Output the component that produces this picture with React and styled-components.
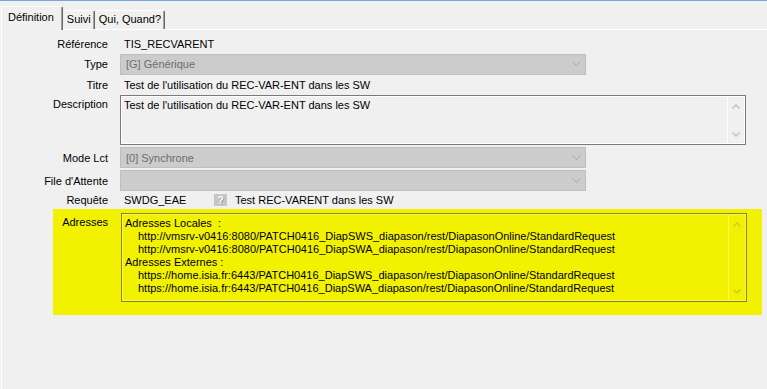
import styled, { createGlobalStyle } from 'styled-components';

const GlobalStyle = createGlobalStyle`
  html, body {
    margin: 0;
    padding: 0;
    background: #f0f0f0;
  }
  body {
    font-family: "Liberation Sans", Arial, sans-serif;
    font-size: 11px;
    color: #000;
  }
`;

const Window = styled.div`
  width: 767px;
  height: 389px;
  background: #f0f0f0;
  border-top: 1px solid #73a7e6;
  box-sizing: border-box;
  display: flex;
  flex-direction: column;
  overflow: hidden;
`;

const TabStrip = styled.div`
  display: flex;
  align-items: flex-end;
  height: 28px;
  padding-left: 1px;
  position: relative;
  z-index: 1;
`;

const Tab = styled.div`
  box-sizing: border-box;
  height: ${({ $active }) => ($active ? '24px' : '19px')};
  margin-bottom: ${({ $active }) => ($active ? '-1px' : '0')};
  padding: ${({ $active }) => ($active ? '4px 8px 0 6px' : '2px 3px 0 3px')};
  background: #f0f0f0;
  border-top: 1px solid #ffffff;
  border-left: 1px solid ${({ $active }) => ($active ? '#ffffff' : '#f0f0f0')};
  border-right: 1px solid #696969;
  border-top-left-radius: 2px;
  border-top-right-radius: 2px;
  white-space: nowrap;
  box-shadow: inset -1px 0 0 #a0a0a0;
`;

const Panel = styled.div`
  flex: 1;
  margin-left: 1px;
  border-left: 1px solid #ffffff;
  border-top: 1px solid #ffffff;
  padding-top: 5px;
  display: flex;
  flex-direction: column;
`;

const Row = styled.div`
  display: grid;
  grid-template-columns: 106px 1fr;
  column-gap: 12px;
  height: ${({ $h }) => $h}px;
  margin-bottom: ${({ $mb }) => $mb || 0}px;
  align-items: ${({ $top }) => ($top ? 'start' : 'center')};
`;

const Label = styled.div`
  text-align: right;
  white-space: nowrap;
  padding-top: ${({ $top }) => ($top ? '3px' : '0')};
`;

const Value = styled.div`
  padding-left: 4px;
  white-space: nowrap;
  display: flex;
  align-items: center;
`;

const Combo = styled.div`
  box-sizing: border-box;
  width: 466px;
  height: 21px;
  background: #cccccc;
  border: 1px solid #bfbfbf;
  color: #6d6d6d;
  padding-left: 5px;
  display: flex;
  align-items: center;
  justify-content: space-between;
`;

const Chevron = styled.svg`
  width: 9px;
  height: 6px;
  margin-right: 4px;
`;

const Memo = styled.div`
  box-sizing: border-box;
  width: 626px;
  height: ${({ $h }) => $h}px;
  border: 1px solid ${({ $tone }) => ($tone === 'yellow' ? '#85851c' : '#7a7a7a')};
  box-shadow: inset 0 0 0 1px ${({ $tone }) => ($tone === 'yellow' ? '#f8f85a' : '#ffffff')};
  background: ${({ $tone }) => ($tone === 'yellow' ? '#f2f200' : '#f0f0f0')};
  display: flex;
`;

const MemoText = styled.div`
  flex: 1;
  padding: 3px 3px 0 3px;
  line-height: 13px;
  white-space: nowrap;
  overflow: hidden;
`;

const Indent = styled.div`
  padding-left: 13px;
`;

const ScrollBar = styled.div`
  width: 17px;
  margin: 1px 1px 1px 0;
  border-left: 1px solid ${({ $tone }) => ($tone === 'yellow' ? '#f8f85a' : '#ffffff')};
  display: flex;
  flex-direction: column;
  justify-content: space-between;
  align-items: center;
  padding: 7px 0 6px;
  box-sizing: border-box;
`;

const Arrow = styled.svg`
  width: 8px;
  height: 5px;
`;

const HelpIcon = styled.span`
  display: inline-flex;
  align-items: center;
  justify-content: center;
  width: 13px;
  height: 12px;
  background: #c6c6c6;
  color: #ffffff;
  font-weight: bold;
  font-size: 10px;
  margin: 0 8px 0 0;
  text-shadow: 1px 1px 0 #9a9a9a;
`;

const RequestCode = styled.span`
  width: 90px;
`;

const Highlight = styled.div`
  margin-left: 51px;
  width: 709px;
  height: 106px;
  background: #f2f200;
  display: grid;
  grid-template-columns: 55px 1fr;
  column-gap: 13px;
  align-items: start;
  padding-top: 4px;
  box-sizing: border-box;
`;

const ChevronDown = ({ color }) => (
  <Chevron viewBox="0 0 9 6">
    <polyline points="0.5,0.5 4.5,4.5 8.5,0.5" fill="none" stroke={color} strokeWidth="1" />
  </Chevron>
);

const ScrollArrows = ({ tone }) => {
  const c = tone === 'yellow' ? '#cccc20' : '#c0c0c0';
  return (
    <ScrollBar $tone={tone}>
      <Arrow viewBox="0 0 8 5">
        <polyline points="0.5,4.5 4,1 7.5,4.5" fill="none" stroke={c} strokeWidth="1.4" />
      </Arrow>
      <Arrow viewBox="0 0 8 5">
        <polyline points="0.5,0.5 4,4 7.5,0.5" fill="none" stroke={c} strokeWidth="1.4" />
      </Arrow>
    </ScrollBar>
  );
};

const App = () => {
  return (
    <>
      <GlobalStyle />
      <Window>
        <TabStrip>
          <Tab $active>Définition</Tab>
          <Tab>Suivi</Tab>
          <Tab>Qui, Quand?</Tab>
        </TabStrip>
        <Panel>
          <Row $h={18}>
            <Label>Référence</Label>
            <Value>TIS_RECVARENT</Value>
          </Row>
          <Row $h={22}>
            <Label>Type</Label>
            <Combo>
              [G] Générique
              <ChevronDown color="#a8a8a8" />
            </Combo>
          </Row>
          <Row $h={20}>
            <Label>Titre</Label>
            <Value>Test de l'utilisation du REC-VAR-ENT dans les SW</Value>
          </Row>
          <Row $h={50} $mb={2} $top>
            <Label $top>Description</Label>
            <Memo $h={50}>
              <MemoText>Test de l'utilisation du REC-VAR-ENT dans les SW</MemoText>
              <ScrollArrows />
            </Memo>
          </Row>
          <Row $h={21} $mb={2}>
            <Label>Mode Lct</Label>
            <Combo>
              [0] Synchrone
              <ChevronDown color="#a8a8a8" />
            </Combo>
          </Row>
          <Row $h={21}>
            <Label>File d'Attente</Label>
            <Combo>
              <span />
              <ChevronDown color="#a8a8a8" />
            </Combo>
          </Row>
          <Row $h={18}>
            <Label>Requête</Label>
            <Value>
              <RequestCode>SWDG_EAE</RequestCode>
              <HelpIcon>?</HelpIcon>
              Test REC-VARENT dans les SW
            </Value>
          </Row>
          <Highlight>
            <Label $top>Adresses</Label>
            <Memo $h={89} $tone="yellow">
              <MemoText>
                <div>Adresses Locales&nbsp; :</div>
                <Indent>http://vmsrv-v0416:8080/PATCH0416_DiapSWS_diapason/rest/DiapasonOnline/StandardRequest</Indent>
                <Indent>http://vmsrv-v0416:8080/PATCH0416_DiapSWA_diapason/rest/DiapasonOnline/StandardRequest</Indent>
                <div>Adresses Externes :</div>
                <Indent>https://home.isia.fr:6443/PATCH0416_DiapSWS_diapason/rest/DiapasonOnline/StandardRequest</Indent>
                <Indent>https://home.isia.fr:6443/PATCH0416_DiapSWA_diapason/rest/DiapasonOnline/StandardRequest</Indent>
              </MemoText>
              <ScrollArrows tone="yellow" />
            </Memo>
          </Highlight>
        </Panel>
      </Window>
    </>
  );
};

export default App;
